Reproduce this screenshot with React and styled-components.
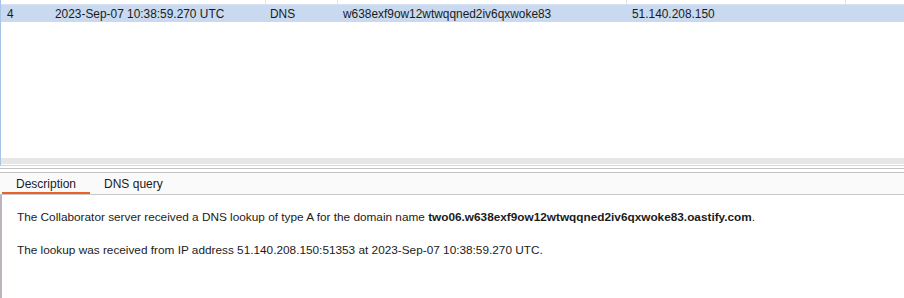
import { createGlobalStyle, styled } from "styled-components";

const GlobalStyle = createGlobalStyle`
  html, body {
    margin: 0;
    padding: 0;
    background: #ffffff;
  }
  body {
    font-family: "Liberation Sans", Arial, sans-serif;
    font-size: 12px;
    color: #1b1b1b;
  }
`;

const Page = styled.div`
  width: 904px;
  height: 298px;
  display: flex;
  flex-direction: column;
  overflow: hidden;
`;

const TablePane = styled.div`
  height: 165px;
  display: flex;
  flex-direction: column;
  border-left: 1px solid #a8c3e6;
  border-bottom: 1px solid #c4d8f0;
`;

const HeaderStrip = styled.div`
  height: 4px;
  display: grid;
  grid-template-columns: 265px 72px 289px 219px 1fr;
`;

const HeaderCell = styled.div`
  border-right: 1px solid #e4e4e4;
`;

const Row = styled.div`
  height: 17px;
  display: grid;
  grid-template-columns: 48px 215px 73px 289px 1fr;
  align-items: center;
  background: #c9d9ef;
  border-top: 1px solid #d6e2f2;
  line-height: 16px;
`;

const Cell = styled.div`
  padding-left: 6px;
  white-space: nowrap;
  font-size: 11.9px;
`;

const TableBody = styled.div`
  flex: 1;
`;

const ScrollTrack = styled.div`
  height: 6px;
  margin-bottom: 1px;
  background: #e6e6e6;
`;

const Splitter = styled.div`
  height: 5px;
  border-top: 1px solid #c2c2c2;
  border-bottom: 1px solid #c2c2c2;
  margin-top: 2px;
  box-sizing: border-box;
`;

const TabBar = styled.div`
  height: 21px;
  display: flex;
  align-items: stretch;
  background: #fafafa;
  border-bottom: 1px solid #c8c8c8;
  padding-left: 2px;
`;

const Tab = styled.div`
  padding: 2px 14px 0 14px;
  display: flex;
  align-items: center;
  box-sizing: border-box;
  border-bottom: 2px solid ${(p) => (p.$active ? "#e8622a" : "transparent")};
  color: #1b1b1b;
`;

const Content = styled.div`
  flex: 1;
  border-left: 2px solid #bdb3bd;
  padding: 15px 0 0 15px;
  line-height: 15px;
  font-size: 11.8px;
`;

const Para = styled.p`
  margin: 0 0 18px 0;
  white-space: nowrap;
`;

export default function App() {
  return (
    <Page>
      <GlobalStyle />
      <TablePane>
        <HeaderStrip>
          <HeaderCell />
          <HeaderCell />
          <HeaderCell />
          <HeaderCell />
          <div />
        </HeaderStrip>
        <Row>
          <Cell>4</Cell>
          <Cell>2023-Sep-07 10:38:59.270 UTC</Cell>
          <Cell>DNS</Cell>
          <Cell>w638exf9ow12wtwqqned2iv6qxwoke83</Cell>
          <Cell>51.140.208.150</Cell>
        </Row>
        <TableBody />
        <ScrollTrack />
      </TablePane>
      <Splitter />
      <TabBar>
        <Tab $active>Description</Tab>
        <Tab>DNS query</Tab>
      </TabBar>
      <Content>
        <Para>
          The Collaborator server received a DNS lookup of type A for the domain name{" "}
          <b>two06.w638exf9ow12wtwqqned2iv6qxwoke83.oastify.com</b>.
        </Para>
        <Para>
          The lookup was received from IP address 51.140.208.150:51353 at 2023-Sep-07 10:38:59.270 UTC.
        </Para>
      </Content>
    </Page>
  );
}
